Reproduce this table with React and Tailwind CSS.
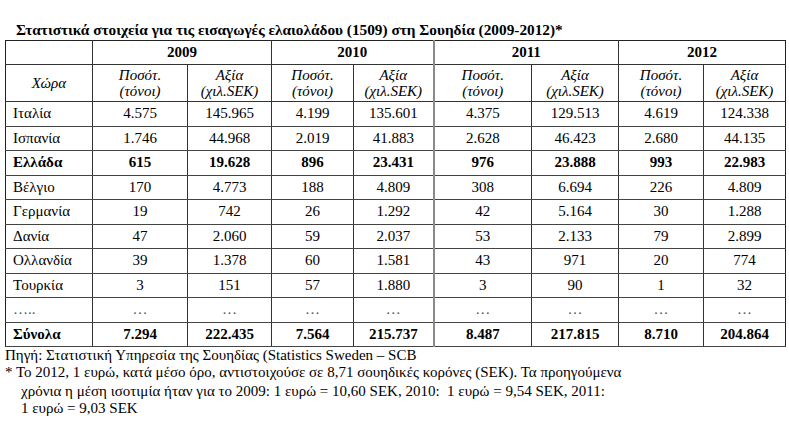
const rows = [
  { name: 'Ιταλία', v: ['4.575', '145.965', '4.199', '135.601', '4.375', '129.513', '4.619', '124.338'] },
  { name: 'Ισπανία', v: ['1.746', '44.968', '2.019', '41.883', '2.628', '46.423', '2.680', '44.135'] },
  { name: 'Ελλάδα', v: ['615', '19.628', '896', '23.431', '976', '23.888', '993', '22.983'], bold: true },
  { name: 'Βέλγιο', v: ['170', '4.773', '188', '4.809', '308', '6.694', '226', '4.809'] },
  { name: 'Γερμανία', v: ['19', '742', '26', '1.292', '42', '5.164', '30', '1.288'] },
  { name: 'Δανία', v: ['47', '2.060', '59', '2.037', '53', '2.133', '79', '2.899'] },
  { name: 'Ολλανδία', v: ['39', '1.378', '60', '1.581', '43', '971', '20', '774'] },
  { name: 'Τουρκία', v: ['3', '151', '57', '1.880', '3', '90', '1', '32'] },
  { name: '…..', v: ['…', '…', '…', '…', '…', '…', '…', '…'], dots: true },
  { name: 'Σύνολα', v: ['7.294', '222.435', '7.564', '215.737', '8.487', '217.815', '8.710', '204.864'], bold: true },
];

const years = ['2009', '2010', '2011', '2012'];

// left border of each cell; the 2011 group has a heavier grey rule
const cellBorder = (i) => (i === 4 ? 'border-l-2 border-l-[#8a8a8a]' : 'border-l border-l-[#333]');

export default function App() {
  return (
    <div className="w-[789px] h-[428px] bg-white text-black overflow-hidden font-['Liberation_Serif','Times_New_Roman',serif]">
      <div className="pt-[21px] pl-[16px] h-[40px] text-[15.3px] font-bold leading-[18px]">
        Στατιστικά στοιχεία για τις εισαγωγές ελαιολάδου (1509) στη Σουηδία (2009-2012)*
      </div>

      <table className="ml-[5px] w-[780px] table-fixed border-collapse border border-[#222] text-[15px] leading-[17px]">
        <colgroup>
          <col className="w-[87px]" />
          <col className="w-[95px]" />
          <col className="w-[84px]" />
          <col className="w-[82px]" />
          <col className="w-[80px]" />
          <col className="w-[98px]" />
          <col className="w-[87px]" />
          <col className="w-[85px]" />
          <col className="w-[82px]" />
        </colgroup>
        <thead>
          <tr className="h-[24px]">
            <td className="border-b border-b-[#333]"></td>
            {years.map((y, i) => (
              <td
                key={y}
                colSpan={2}
                className={`text-center font-bold border-b border-b-[#333] ${i === 2 ? 'border-l-2 border-l-[#8a8a8a]' : 'border-l border-l-[#333]'}`}
              >
                {y}
              </td>
            ))}
          </tr>
          <tr className="h-[37px]">
            <td className="text-center italic border-b border-b-[#333]">Χώρα</td>
            {years.map((y, i) => [
              <td
                key={y + 'q'}
                className={`text-center italic leading-[16px] border-b border-b-[#333] ${i === 2 ? 'border-l-2 border-l-[#8a8a8a]' : 'border-l border-l-[#333]'}`}
              >
                Ποσότ.<br />(τόνοι)
              </td>,
              <td key={y + 'v'} className="text-center italic leading-[16px] border-b border-b-[#333] border-l border-l-[#333]">
                Αξία<br />(χιλ.SEK)
              </td>,
            ])}
          </tr>
        </thead>
        <tbody>
          {rows.map((r) => (
            <tr key={r.name} className={`h-[24.5px] ${r.bold ? 'font-bold' : ''}`}>
              <td className={`pl-[7px] border-b border-b-[#444] ${r.dots ? 'text-[#555]' : ''}`}>{r.name}</td>
              {r.v.map((x, i) => (
                <td key={i} className={`text-center border-b border-b-[#444] ${cellBorder(i)} ${r.dots ? 'text-[#555]' : ''}`}>
                  {x}
                </td>
              ))}
            </tr>
          ))}
        </tbody>
      </table>

      <div className="pl-[5px] text-[15px] leading-[16px]">
        <p>Πηγή: Στατιστική Υπηρεσία της Σουηδίας (Statistics Sweden – SCB</p>
        <p className="mt-[1px]">* Το 2012, 1 ευρώ, κατά μέσο όρο, αντιστοιχούσε σε 8,71 σουηδικές κορόνες (SEK). Τα προηγούμενα</p>
        <p className="pl-[16px] mt-[3px] leading-[17px]">χρόνια η μέση ισοτιμία ήταν για το 2009: 1 ευρώ = 10,60 SEK, 2010:&nbsp; 1 ευρώ = 9,54 SEK, 2011:</p>
        <p className="pl-[16px] leading-[17px]">1 ευρώ = 9,03 SEK</p>
      </div>
    </div>
  );
}
